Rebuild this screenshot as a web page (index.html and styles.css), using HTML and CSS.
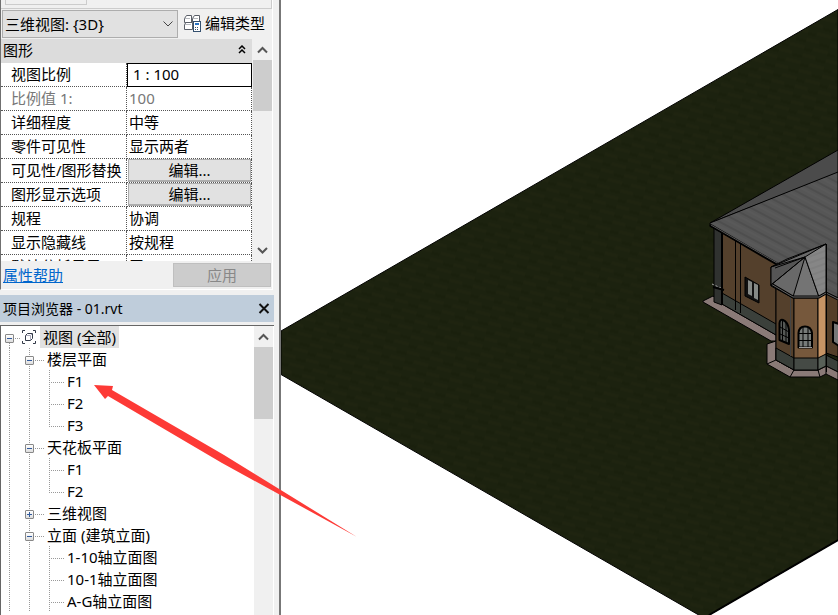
FILE: index.html
```html
<!DOCTYPE html>
<html lang="zh-CN">
<head>
<meta charset="utf-8">
<title>01.rvt</title>
<link rel="stylesheet" href="styles.css">
</head>
<body>
<div class="app">
  <aside class="sidebar">
    <section class="properties">
      <div class="preview"><div class="preview-inner"></div></div>
      <div class="type-row">
        <div class="select-wrap">
          <select class="type-select" aria-label="视图类型"><option>三维视图: {3D}</option></select>
          <svg class="select-arrow" viewBox="0 0 10 6" width="10" height="6"><path d="M.5 .5 5 5 9.500 .5" fill="none" stroke="#444"/></svg>
        </div>
        <button class="edit-type" type="button">
          <svg width="17" height="17" viewBox="0 0 17 17" fill="#fff" stroke="#5a5f68">
            <path d="M.5 3.500 2.500 .5H7.500V7.500H.5Z"/><path d="M8.500 3.500 10.500 .5H15.500V6L14.500 7.500H8.500Z"/>
            <path d="M.5 9.500 2 7.500H8.500V14.500H.5Z"/>
            <path d="M1 3.500H6M9 3.500H14M1 9.500H7" stroke="#b5b8bd"/>
            <rect x="9.500" y="6.500" width="7" height="10" stroke="#35516f"/>
            <path d="M11 9H15" stroke="#2873c4" stroke-width="2"/><path d="M11 12.500H15M11 14.500H15" stroke="#35516f" stroke-dasharray="1 1"/>
          </svg>
          <span>编辑类型</span>
        </button>
      </div>
      <div class="grid-area">
        <div class="grid-main">
          <div class="group-head"><span>图形</span>
            <svg width="8" height="10" viewBox="0 0 8 10" fill="none" stroke="#000" stroke-width="1.500"><path d="M1 4 4 1 7 4M1 8 4 5 7 8"/></svg>
          </div>
          <table class="props">
            <tbody>
              <tr><th><label for="scale">视图比例</label></th><td><input id="scale" class="scale" value="1 : 100"></td></tr>
              <tr class="muted"><th>比例值 1:</th><td>100</td></tr>
              <tr><th>详细程度</th><td>中等</td></tr>
              <tr><th>零件可见性</th><td>显示两者</td></tr>
              <tr><th>可见性/图形替换</th><td><button class="cell-button" type="button">编辑...</button></td></tr>
              <tr><th>图形显示选项</th><td><button class="cell-button" type="button">编辑...</button></td></tr>
              <tr><th>规程</th><td>协调</td></tr>
              <tr><th>显示隐藏线</th><td>按规程</td></tr>
              <tr><th>默认分析显示</th><td>无</td></tr>
            </tbody>
          </table>
        </div>
        <div class="scrollbar">
          <svg class="arrow" viewBox="0 0 19 21"><path d="M5 13.500 9.500 9 14 13.500" fill="none" stroke="#555" stroke-width="2"/></svg>
          <div class="thumb"></div>
          <svg class="arrow down" viewBox="0 0 19 21"><path d="M5 8 9.500 12.500 14 8" fill="none" stroke="#555" stroke-width="2"/></svg>
        </div>
      </div>
      <div class="panel-foot">
        <a class="help" href="#help">属性帮助</a>
        <button class="apply" type="button" disabled>应用</button>
      </div>
    </section>

    <section class="browser">
      <header class="browser-title">
        <span>项目浏览器 - 01.rvt</span>
        <button class="close" type="button" aria-label="关闭"><svg width="12" height="11" viewBox="0 0 12 11"><path d="M1.500 1 10.500 10M10.500 1 1.500 10" stroke="#111" stroke-width="2"/></svg></button>
      </header>
      <div class="tree-frame">
        <div class="tree">
          <div class="row"><i class="node root"><button class="toggle" type="button" aria-label="折叠"></button></i>
            <svg class="view-icon" width="16" height="16" viewBox="0 0 16 16" fill="none" stroke="#333a48"><path d="M4 1.500H1.500V4M12 1.500H14.500V4M1.500 12V14.500H4M14.500 12V14.500H12"/><path d="M4.500 6.500 6.500 4.500H11.500V9.500L9.500 11.500H4.500Z" fill="#fff"/><path d="M5 6.500H9.500V11M9.500 6.500 11 5" stroke="#aab"/></svg>
            <span class="label selected">视图 (全部)</span></div>
          <div class="row"><i class="guide"></i><i class="node open"><button class="toggle" type="button" aria-label="折叠"></button></i><span class="label">楼层平面</span></div>
          <div class="row"><i class="guide"></i><i class="guide"></i><i class="node"></i><span class="label">F1</span></div>
          <div class="row"><i class="guide"></i><i class="guide"></i><i class="node"></i><span class="label">F2</span></div>
          <div class="row"><i class="guide"></i><i class="guide"></i><i class="node last"></i><span class="label">F3</span></div>
          <div class="row"><i class="guide"></i><i class="node open"><button class="toggle" type="button" aria-label="折叠"></button></i><span class="label">天花板平面</span></div>
          <div class="row"><i class="guide"></i><i class="guide"></i><i class="node"></i><span class="label">F1</span></div>
          <div class="row"><i class="guide"></i><i class="guide"></i><i class="node last"></i><span class="label">F2</span></div>
          <div class="row"><i class="guide"></i><i class="node"><button class="toggle plus" type="button" aria-label="展开"></button></i><span class="label">三维视图</span></div>
          <div class="row"><i class="guide"></i><i class="node open"><button class="toggle" type="button" aria-label="折叠"></button></i><span class="label">立面 (建筑立面)</span></div>
          <div class="row"><i class="guide"></i><i class="guide"></i><i class="node"></i><span class="label">1-10轴立面图</span></div>
          <div class="row"><i class="guide"></i><i class="guide"></i><i class="node"></i><span class="label">10-1轴立面图</span></div>
          <div class="row"><i class="guide"></i><i class="guide"></i><i class="node"></i><span class="label">A-G轴立面图</span></div>
        </div>
        <div class="scrollbar">
          <svg class="arrow" viewBox="0 0 19 21"><path d="M5 13.500 9.500 9 14 13.500" fill="none" stroke="#555" stroke-width="2"/></svg>
          <div class="thumb tall"></div>
        </div>
      </div>
    </section>
  </aside>

  <main class="canvas">
    <svg class="model" viewBox="281 0 557 615" preserveAspectRatio="xMinYMin slice" stroke-linejoin="round">
      <defs>
        <pattern id="grass" width="24" height="16" patternUnits="userSpaceOnUse" patternTransform="rotate(14)">
          <rect width="24" height="16" fill="#1c220f"/>
          <path d="M0 3H13M9 11H24" stroke="#1f2410" stroke-width="3"/>
          <path d="M14 5H24M0 13H8" stroke="#1a200d" stroke-width="3"/>
        </pattern>
        <pattern id="tiles" width="20" height="9" patternUnits="userSpaceOnUse" patternTransform="rotate(28)">
          <rect width="20" height="9" fill="#565656"/><path d="M0 2H20" stroke="#4e4e4e" stroke-width="2"/><path d="M0 6H20" stroke="#5c5c5c"/>
        </pattern>
        <pattern id="tiles-light" width="20" height="6" patternUnits="userSpaceOnUse" patternTransform="rotate(-20)">
          <rect width="20" height="6" fill="#868686"/><path d="M0 2H20" stroke="#7a7a7a"/>
        </pattern>
      </defs>
      <path d="M281 331 838 9.500V540L704 618 281 374.500Z" fill="url(#grass)" stroke="#000"/>
      <path d="M709 615 838 540" stroke="#000" stroke-width="2"/>
      <g stroke="#000">
        <path d="M703 301 713 296 722 303 776 334V341H771L703 302Z" fill="#8a7a77"/>
        <path d="M714 228 722 232V305L714 302Z" fill="#303230"/>
        <path d="M722 231 776 263V335L722 304Z" fill="#54402c"/>
        <path d="M722 293 776 324V335L722 304Z" fill="#3b403b"/>
        <path d="M722 232V305" stroke-width="2"/>
        <path d="M735.500 238V310M740.500 241V313" fill="none"/>
        <path d="M712 284 723 289" stroke="#aaa" stroke-dasharray="2 2"/><path d="M713 287 724 290" stroke-width="2"/>
        <path d="M745 277 759 285V303L745 296Z" fill="#111"/>
        <path d="M748 280 752 282V296L748 294ZM754 283 758 285V300L754 298Z" fill="#858986" stroke="none"/>
        <path d="M710 223 838 150V173Z" fill="#4b4b4b"/>
        <path d="M710 223 838 172V305L777 264 710 226Z" fill="url(#tiles)"/>
        <path d="M710 225 777 264" stroke-width="3"/><path d="M711 225 777 263" stroke="#555"/>
        <path d="M826 293 838 299V357L826 353Z" fill="#543e29"/>
        <path d="M826 355 838 361V372L826 366Z" fill="#3b403b"/>
        <path d="M833 322 839 324V346L833 342Z" fill="#777" stroke-width="2"/>
        <path d="M767 344 776 341V360L794 370H818L826 366 838 372V380L826 374 820 377H790L767 364Z" fill="#8a7a77"/>
        <path d="M767 364 776 360M790 377 794 370M820 377 818 370M826 366V374"/>
        <path d="M776 286 794 297V370L776 360Z" fill="#54402c"/>
        <path d="M794 297H818V370H794Z" fill="#76583c"/>
        <path d="M818 297 826 292V366L818 370Z" fill="#c79465"/>
        <path d="M776 348 794 358V370L776 360Z" fill="#393e39"/>
        <path d="M794 358H818V370H794Z" fill="#454a45"/>
        <path d="M818 358 826 354V366L818 370Z" fill="#586058"/>
        <path d="M790.500 297V356" stroke="#444"/>
        <path d="M771 267 787 259 826 244V293L818 298H793L771 286Z" fill="#696969"/>
        <path d="M805 257 771 267V285Z" fill="#555"/>
        <path d="M805 257 793 297H819Z" fill="#747474"/>
        <path d="M805 257 826 244V293L819 297Z" fill="url(#tiles-light)"/>
        <path d="M771 284 793 297H819L826 293 838 299" fill="none" stroke-width="3"/>
        <path d="M771 284 793 297H819L826 293 838 299" fill="none" stroke="#666"/>
        <path d="M805 257 771 285M771 267 826 244M775 268 805 257M826.500 244V372" fill="none"/>
        <path d="M779.500 340V323Q780 319 783 320 788 322 789 330V344Z" fill="#555855" stroke-width="2"/>
        <path d="M782.500 320V342M786 322V343M780 327 789 332M780 334 789 338"/>
        <path d="M798.500 347.500V333Q799 326.500 805 326.500 811 326.500 812 333V347.500Z" fill="#777b79" stroke-width="2"/>
        <path d="M803 327V347M808 327V347M798 333.500H812M798 340.500H812"/>
        <path d="M799 347.500H812" stroke="#999"/>
      </g>
    </svg>
  </main>
  <svg class="pointer" width="264" height="154" viewBox="0 0 264 154"><path d="M0 0 19 1 18 5 130 70 263 152 128 78 14 11 11 14Z" fill="#fd3a36"/></svg>
</div>
</body>
</html>
```
FILE: styles.css
```css
* { box-sizing: border-box; }
body {
  margin: 0;
  font: 15px/22px "Noto Sans", "Noto Sans CJK SC", sans-serif;
  color: #000;
  background: #fff;
}
button, input, select { font: inherit; color: inherit; margin: 0; }
.app { position: relative; display: flex; height: 100vh; overflow: hidden; }
.sidebar {
  display: flex;
  flex-direction: column;
  flex: 0 0 281px;
  padding-right: 5px;
  background: #f0f0f0;
  border-right: 2px solid #777;
}
.properties {
  flex: none;
  margin-right: 1px;
  border-left: 1px solid #707070;
  border-right: 1px solid #fff;
  border-bottom: 1px solid #fff;
}
.preview { height: 9px; padding-left: 4px; border-right: 1px solid #ccc; border-bottom: 1px solid #ccc; }
.preview-inner { width: 82px; height: 5px; border: 1px solid #ccc; border-top: 0; }
.type-row { display: flex; align-items: center; height: 30px; padding-left: 1px; gap: 6px; }
.select-wrap { position: relative; width: 176px; }
.type-select {
  display: block;
  width: 100%;
  height: 28px;
  padding: 0 20px 0 2px;
  appearance: none;
  background: #e1e1e1;
  border: 1px solid #adadad;
  border-radius: 0;
}
.select-arrow { position: absolute; right: 5px; top: 11px; pointer-events: none; }
.edit-type {
  display: flex;
  align-items: center;
  gap: 4px;
  height: 24px;
  padding: 0 0 2px;
  border: 0;
  background: none;
  white-space: nowrap;
}
.grid-area { display: flex; height: 222px; overflow: hidden; }
.grid-main { flex: 1; min-width: 0; background: #fff; border-right: 1px solid #f0f0f0; }
.group-head {
  display: flex;
  align-items: center;
  justify-content: space-between;
  height: 24px;
  padding: 0 6px 2px 2px;
  background: #dcdcdc;
}
.props { width: 100%; table-layout: fixed; border-spacing: 0; }
.props th, .props td {
  height: 24px;
  padding: 0 0 2px 2px;
  line-height: 20px;
  font-weight: 400;
  text-align: left;
  white-space: nowrap;
  border-right: 1px dotted #555;
  border-bottom: 1px dotted #555;
}
.props th { width: 126px; padding-left: 10px; }
.props .muted { color: #777; }
.props td:has(input) { padding: 0; border: 0; }
.props td:has(button) { padding: 0 0 0 1px; }
.scale { display: block; width: 100%; height: 24px; padding: 0 5px 2px; border: 1px solid #000; background: #fff; }
.cell-button {
  display: block;
  width: 100%;
  height: 23px;
  padding: 0;
  line-height: 20px;
  background: #e1e1e1;
  border: 1px solid #adadad;
  border-bottom-width: 2px;
}
.scrollbar { display: flex; flex-direction: column; flex: 0 0 19px; background: #f0f0f0; }
.arrow { display: block; height: 21px; }
.down { margin-top: auto; }
.thumb { height: 51px; background: #cdcdcd; }
.tall { height: 72px; }
.panel-foot {
  display: flex;
  align-items: center;
  justify-content: space-between;
  height: 28px;
  padding: 0 1px 0 2px;
}
.help { color: #0066cc; }
.apply { width: 98px; height: 24px; padding: 0; line-height: 20px; color: #888; background: #ccc; border: 1px solid #bfbfbf; }
.browser { display: flex; flex-direction: column; flex: 1; min-height: 0; margin-top: 5px; }
.browser-title {
  display: flex;
  flex: none;
  align-items: center;
  justify-content: space-between;
  height: 27px;
  margin-bottom: 3px;
  padding: 0 4px 0 3px;
  font-size: 14px;
  background: #bfcddb;
}
.close { display: flex; padding: 0; border: 0; background: none; }
.tree-frame {
  display: flex;
  flex: 1;
  min-height: 0;
  overflow: hidden;
  border-top: 1px solid #666;
  border-left: 1px solid #666;
  background: #fff;
}
.tree { flex: 1; min-width: 0; overflow: hidden; }
.row { display: flex; align-items: center; height: 22px; white-space: nowrap; }
.guide, .node {
  --v: repeating-linear-gradient(#999 0 1px, transparent 1px 2px);
  --h: repeating-linear-gradient(90deg, #999 0 1px, transparent 1px 2px);
  flex: none;
  width: 20px;
  height: 22px;
  background: var(--v) 8px 0 / 1px 22px no-repeat;
}
.node {
  display: flex;
  align-items: center;
  width: 24px;
  padding: 2px 0 0 4px;
  background: var(--v) 8px 0 / 1px 22px no-repeat, var(--h) 8px 12px / 16px 1px no-repeat;
}
.last { background-size: 1px 13px, 16px 1px; }
.root { width: 20px; background-position: 8px 13px, 8px 12px; }
.toggle {
  width: 9px;
  height: 9px;
  padding: 0;
  border: 1px solid #888;
  border-radius: 1px;
  background: linear-gradient(#315a9c, #315a9c) center / 5px 1px no-repeat, linear-gradient(#fff, #ddd);
}
.plus {
  background: linear-gradient(#315a9c, #315a9c) center / 5px 1px no-repeat,
    linear-gradient(#315a9c, #315a9c) center / 1px 5px no-repeat, linear-gradient(#fff, #ddd);
}
.view-icon { flex: none; margin-right: 3px; }
.label { padding-left: 2px; }
.selected { padding: 0 3px; background: #e1e1e1; }
.tree-frame .scrollbar { margin-right: 1px; }
.canvas { flex: 1; min-width: 0; background: #fff; }
.model { display: block; width: 100%; height: 100%; }
.pointer { position: absolute; left: 94px; top: 385px; pointer-events: none; }
```
